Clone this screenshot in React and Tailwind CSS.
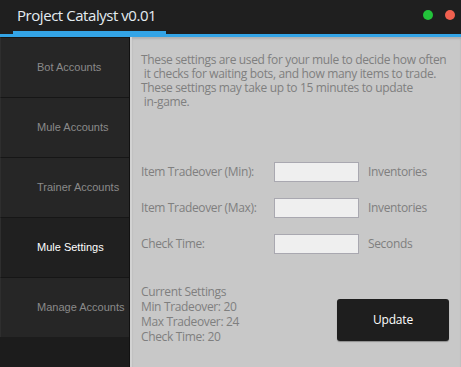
import React from "react";

const navItems = [
  "Bot Accounts",
  "Mule Accounts",
  "Trainer Accounts",
  "Mule Settings",
  "Manage Accounts",
];

const fields = [
  { label: "Item Tradeover (Min):", unit: "Inventories" },
  { label: "Item Tradeover (Max):", unit: "Inventories" },
  { label: "Check Time:", unit: "Seconds" },
];

export default function App() {
  const active = "Mule Settings";

  return (
    <div className="w-[461px] h-[367px] flex flex-col bg-[#1e1e1e] overflow-hidden">
      {/* Title bar */}
      <div className="h-[31px] flex items-center justify-between pl-[17px] pr-[6px] bg-[#1f1f1f]">
        <span className="text-[15px] text-[#e4ecf2] font-['Open_Sans',sans-serif] tracking-[-0.45px]">
          Project Catalyst v0.01
        </span>
        <div className="flex items-center gap-[12px] pb-[2px]">
          <span className="w-[10px] h-[10px] rounded-full bg-[#22c33a]" />
          <span className="w-[10px] h-[10px] rounded-full bg-[#f0604f]" />
        </div>
      </div>

      {/* Tab underline */}
      <div className="flex h-[3px] bg-[#1f1f1f]">
        <div className="w-[13px]" />
        <div className="w-[153px] bg-[#33a4e6]" />
      </div>
      <div className="h-[3px] bg-[#33a4e6]" />

      <div className="flex flex-1 min-h-0">
        {/* Sidebar */}
        <div className="w-[130px] flex flex-col bg-[#1c1c1c] border-r border-[#111]">
          {navItems.map((item) => (
            <div
              key={item}
              className={`h-[60px] flex items-center pl-[36px] whitespace-nowrap border-t border-[#161616] border-l border-l-[#2e2e2e] font-['Liberation_Sans',Arial,sans-serif] text-[11px] ${
                item === active
                  ? "bg-[#202020] text-white"
                  : "bg-[#262626] text-[#8a8a8a]"
              }`}
            >
              {item}
            </div>
          ))}
        </div>

        {/* Content */}
        <div className="flex-1 flex flex-col bg-[#c8c8c8] border-l-[2px] border-[#d2d2d2] shadow-[inset_0_2px_2px_rgba(0,0,0,0.12)] pl-[9px] font-['Open_Sans',sans-serif] text-[12px] text-[#7f7f7f] leading-[14px]">
          <p className="pt-[16px] pr-[6px] tracking-[-0.35px]">
            These settings are used for your mule to decide how often
            <br />
            &nbsp;it checks for waiting bots, and how many items to trade.
            <br />
            These settings may take up to 15 minutes to update
            <br />
            &nbsp;in-game.
          </p>

          <div className="mt-[53px] flex flex-col gap-[16px]">
            {fields.map((f) => (
              <div key={f.label} className="flex items-center h-[20px] tracking-[-0.35px]">
                <span className="w-[133px]">{f.label}</span>
                <div className="w-[85px] h-[20px] bg-[#efefef] border border-[#a9a8b0]" />
                <span className="ml-[9px]">{f.unit}</span>
              </div>
            ))}
          </div>

          <div className="mt-[30px] flex items-start pr-[12px]">
            <p className="flex-1 leading-[15px] tracking-[-0.35px]">
              Current Settings
              <br />
              Min Tradeover: 20
              <br />
              Max Tradeover: 24
              <br />
              Check Time: 20
            </p>
            <button className="mt-[15px] w-[112px] h-[42px] rounded-[3px] bg-[#1e1e1e] text-white text-[12px] tracking-[-0.2px] shadow-[0_1px_1px_rgba(0,0,0,0.3)]">
              Update
            </button>
          </div>
        </div>
      </div>
    </div>
  );
}
